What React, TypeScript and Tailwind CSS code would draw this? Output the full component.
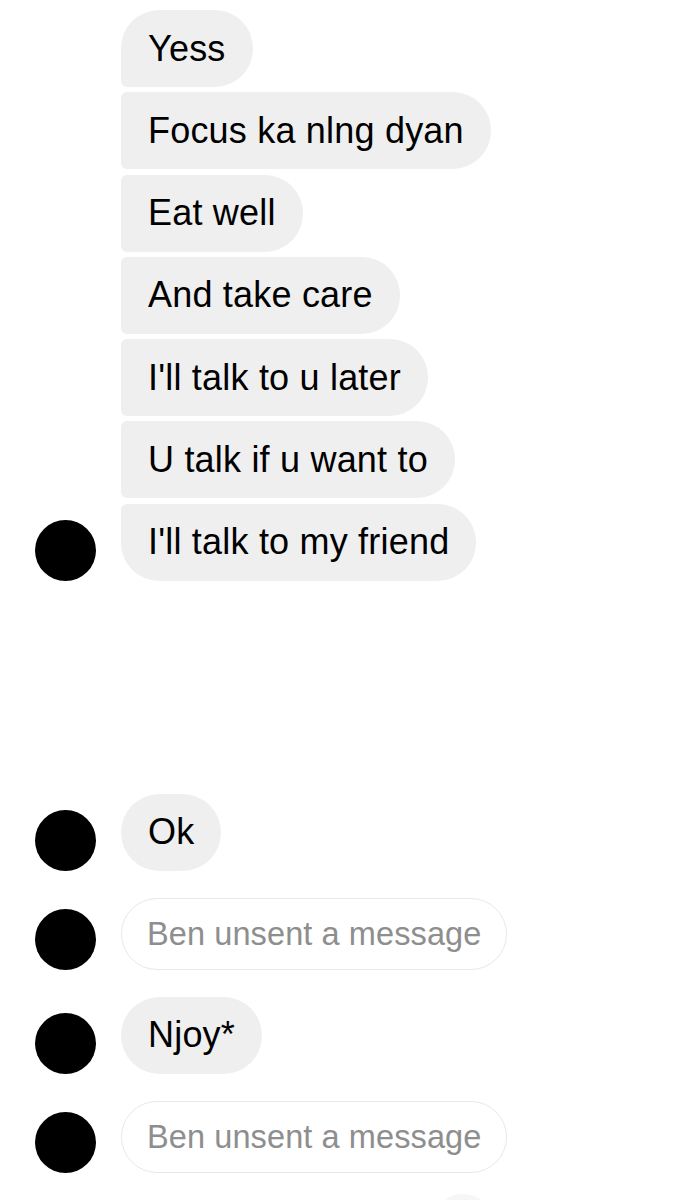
const group = [
  'Yess',
  'Focus ka nlng dyan',
  'Eat well',
  'And take care',
  "I'll talk to u later",
  'U talk if u want to',
  "I'll talk to my friend",
]

const Avatar = () => <div className="w-[61px] h-[61px] rounded-full bg-black shrink-0" />

const Spacer = () => <div className="w-[61px] shrink-0" />

const Bubble = ({ text, shape }: { text: string; shape: string }) => (
  <div
    className={`h-[77px] px-[27px] flex items-center bg-[#efefef] text-black text-[36px] tracking-[0.2px] leading-none whitespace-nowrap ${shape}`}
  >
    {text}
  </div>
)

const Unsent = () => (
  <div className="h-[72px] px-[25px] flex items-center rounded-full border-[1.5px] border-[#e8e8e8] text-[#8e8e8e] text-[32.5px] tracking-[0.1px] leading-none whitespace-nowrap">
    Ben unsent a message
  </div>
)

const App = () => {
  return (
    <div
      className="w-full min-h-screen bg-white overflow-hidden pt-[10px]"
      style={{ fontFamily: '"Liberation Sans", Arial, sans-serif' }}
    >
      {/* Grouped messages */}
      <div className="flex flex-col gap-[5.3px]">
        {group.map((text, i) => {
          const first = i === 0
          const last = i === group.length - 1
          const shape = first
            ? 'rounded-tl-[38px] rounded-bl-[6px] rounded-r-[38px]'
            : last
              ? 'rounded-tl-[6px] rounded-bl-[38px] rounded-r-[38px]'
              : 'rounded-l-[6px] rounded-r-[38px]'
          return (
            <div key={i} className="flex items-end gap-[25px] pl-[35px]">
              {last ? <Avatar /> : <Spacer />}
              <Bubble text={text} shape={shape} />
            </div>
          )
        })}
      </div>

      {/* Later messages */}
      <div className="flex flex-col gap-[27px] mt-[213px]">
        <div className="flex items-end gap-[25px] pl-[35px]">
          <Avatar />
          <Bubble text="Ok" shape="rounded-full" />
        </div>
        <div className="flex items-end gap-[25px] pl-[35px]">
          <Avatar />
          <Unsent />
        </div>
        <div className="flex items-end gap-[25px] pl-[35px]">
          <Avatar />
          <Bubble text="Njoy*" shape="rounded-full" />
        </div>
        <div className="flex items-end gap-[25px] pl-[35px]">
          <Avatar />
          <Unsent />
        </div>
      </div>

      {/* Faint element peeking at the bottom */}
      <div className="ml-[433px] mt-[21px] w-[60px] h-[60px] rounded-full bg-[#f6f6f6]" />
    </div>
  )
}

export default App
